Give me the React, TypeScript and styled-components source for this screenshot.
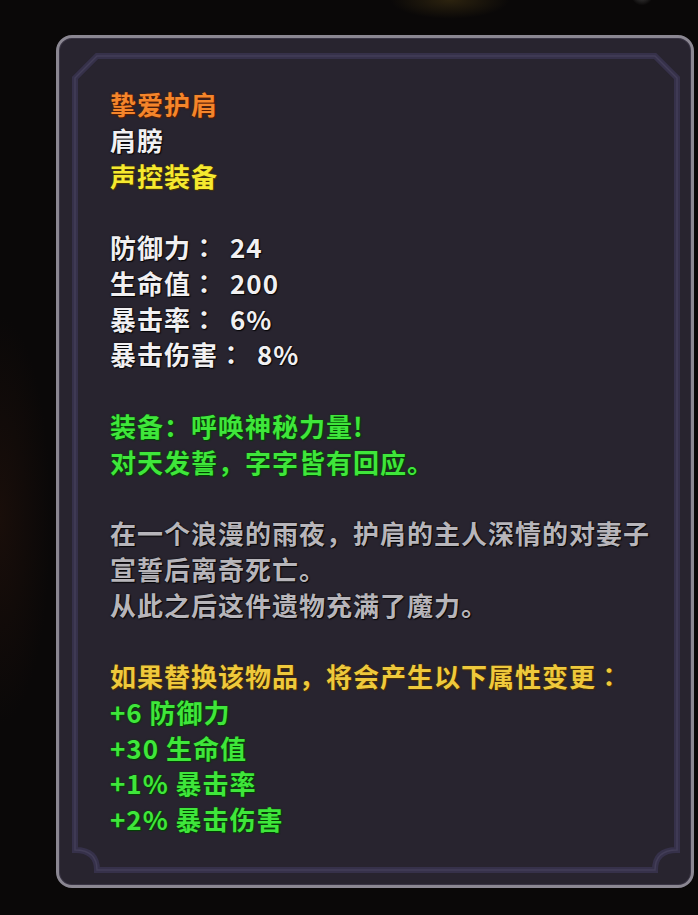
import styled, { createGlobalStyle } from "styled-components";

const GlobalStyle = createGlobalStyle`
    html, body {
        margin: 0;
        padding: 0;
        background: #0a0808;
    }
    * {
        box-sizing: border-box;
    }
`;

type Tone = "orange" | "white" | "yellow" | "green" | "gray" | "gold";

const toneColors: Record<Tone, { color: string; glow: string }> = {
    orange: { color: "#f4852b", glow: "rgba(90, 30, 0, 0.9)" },
    white: { color: "#f1f0f2", glow: "rgba(0, 0, 0, 0.85)" },
    yellow: { color: "#f5e92f", glow: "rgba(80, 60, 0, 0.9)" },
    green: { color: "#3fe63b", glow: "rgba(0, 70, 0, 0.95)" },
    gray: { color: "#b7b5ba", glow: "rgba(0, 0, 0, 0.8)" },
    gold: { color: "#eec93c", glow: "rgba(80, 50, 0, 0.9)" },
};

const Page = styled.div`
    width: 698px;
    height: 915px;
    padding: 35px 4px 0 56px;
    overflow: hidden;
    background:
        radial-gradient(ellipse 70px 22px at 450px 0px, rgba(95, 75, 25, 0.4), transparent 85%),
        radial-gradient(circle 12px at 642px -6px, rgba(150, 150, 150, 0.45), transparent 95%),
        radial-gradient(ellipse 60px 240px at 0px 520px, rgba(40, 20, 12, 0.5), transparent 85%),
        #0a0808;
`;

const Card = styled.div`
    position: relative;
    width: 638px;
    height: 853px;
    border: 3px solid #8b8792;
    border-radius: 16px;
    background: #28242f;
    box-shadow: inset 0 0 0 1px #3a3545;
`;

const Frame = styled.svg`
    position: absolute;
    inset: 0;
    width: 100%;
    height: 100%;
    pointer-events: none;
`;

const Content = styled.div`
    display: flex;
    flex-direction: column;
    padding: 48px 0 0 51px;
    font-family: "Noto Sans CJK SC", "Noto Sans", sans-serif;
    font-weight: 700;
    font-size: 26px;
    letter-spacing: 1px;
    white-space: nowrap;
`;

const Line = styled.div<{ tone: Tone }>`
    display: flex;
    align-items: center;
    height: 35.75px;
    line-height: 35.75px;
    color: ${(p) => toneColors[p.tone].color};
    text-shadow:
        0 0 2px ${(p) => toneColors[p.tone].glow},
        1px 1px 1px ${(p) => toneColors[p.tone].glow};
`;

// centred full-width colon for the stat rows
const Colon = styled.span`
    font-family: "Noto Sans CJK TC", "Noto Sans CJK SC", sans-serif;
`;

const StatValue = styled.span`
    margin-left: 12px;
`;

const Blank = styled.div`
    height: 35.75px;
`;

const stats = [
    ["防御力", "24"],
    ["生命值", "200"],
    ["暴击率", "6%"],
    ["暴击伤害", "8%"],
];

const changes = ["+6 防御力", "+30 生命值", "+1% 暴击率", "+2% 暴击伤害"];

const framePath =
    "M16 40 L38 18 L596 18 L618 40 L618 812 Q596 812 596 832 L38 832 Q38 812 16 812 Z";

const App = () => {
    return (
        <>
            <GlobalStyle />
            <Page>
                <Card>
                    <Frame viewBox="0 0 632 847">
                        <path d={framePath} fill="none" stroke="#36314a" strokeWidth="6" />
                        <path d={framePath} fill="none" stroke="#433e58" strokeWidth="1.5" />
                    </Frame>
                    <Content>
                        <Line tone="orange">挚爱护肩</Line>
                        <Line tone="white">肩膀</Line>
                        <Line tone="yellow">声控装备</Line>
                        <Blank />
                        {stats.map(([label, value]) => (
                            <Line tone="white" key={label}>
                                {label}
                                <Colon>：</Colon>
                                <StatValue>{value}</StatValue>
                            </Line>
                        ))}
                        <Blank />
                        <Line tone="green">装备：呼唤神秘力量!</Line>
                        <Line tone="green">对天发誓，字字皆有回应。</Line>
                        <Blank />
                        <Line tone="gray">在一个浪漫的雨夜，护肩的主人深情的对妻子</Line>
                        <Line tone="gray">宣誓后离奇死亡。</Line>
                        <Line tone="gray">从此之后这件遗物充满了魔力。</Line>
                        <Blank />
                        <Line tone="gold">
                            如果替换该物品，将会产生以下属性变更<Colon>：</Colon>
                        </Line>
                        {changes.map((c) => (
                            <Line tone="green" key={c}>
                                {c}
                            </Line>
                        ))}
                    </Content>
                </Card>
            </Page>
        </>
    );
};

export default App;
